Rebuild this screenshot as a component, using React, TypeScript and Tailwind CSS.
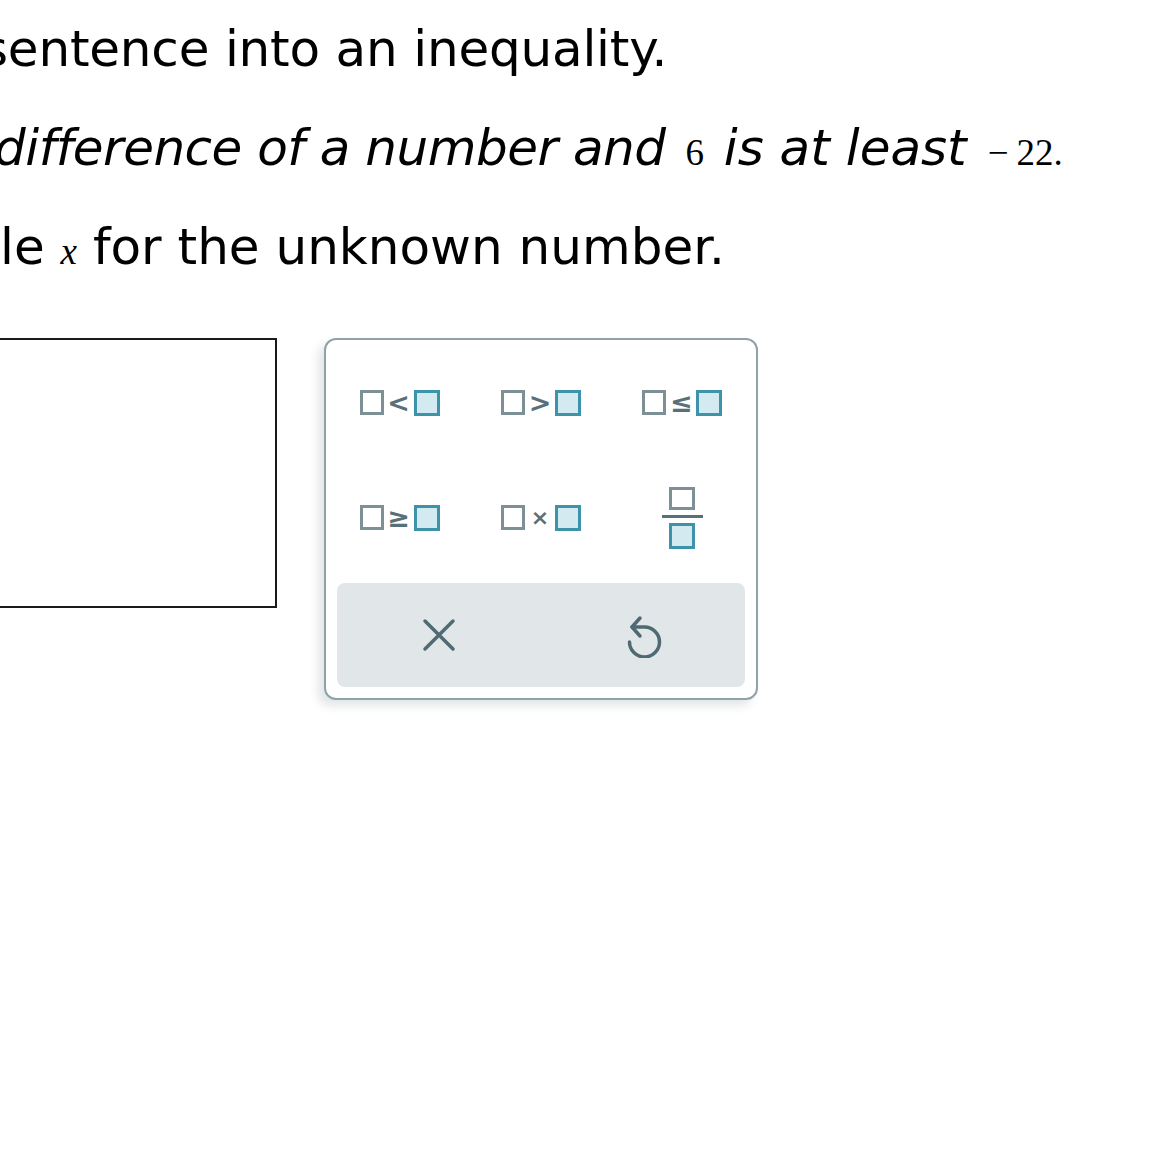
import React from "react";

const GRAY_BOX = "box-border inline-block w-[24px] h-[25px] border-[3px] border-[#7d9096] bg-white";
const BLUE_BOX = "box-border inline-block w-[26px] h-[26px] border-[3px] border-[#3d93aa] bg-[#d3eaf1]";

function Template({ op, small }: { op: string; small?: boolean }) {
  return (
    <span className="inline-flex items-center">
      <span className={GRAY_BOX} />
      <span
        className={`inline-block w-[30px] text-center leading-none text-[#587179] font-['DejaVu_Sans',sans-serif] ${
          small ? "text-[22px] font-bold" : "text-[27px] font-bold"
        }`}
      >
        {op}
      </span>
      <span className={BLUE_BOX} />
    </span>
  );
}

function Fraction() {
  return (
    <span className="inline-flex flex-col items-center">
      <span className="box-border inline-block w-[26px] h-[23px] border-[3px] border-[#7d9096] bg-white" />
      <span className="my-[5px] block h-[3px] w-[41px] bg-[#587179]" />
      <span className="box-border inline-block w-[26px] h-[26px] border-[3px] border-[#3d93aa] bg-[#d3eaf1]" />
    </span>
  );
}

function CloseIcon() {
  return (
    <svg width="34" height="34" viewBox="0 0 34 34" fill="none">
      <path d="M3 3L31 31M31 3L3 31" stroke="#4f6a73" strokeWidth="3.5" strokeLinecap="round" />
    </svg>
  );
}

function UndoIcon() {
  return (
    <svg width="40" height="46" viewBox="0 0 40 46" fill="none">
      <path
        d="M8 15H20.5A15 15 0 1 1 5.5 30"
        stroke="#4f6a73"
        strokeWidth="3.5"
        strokeLinecap="round"
      />
      <path
        d="M16 6L8 15L16 24"
        stroke="#4f6a73"
        strokeWidth="3.5"
        strokeLinecap="round"
        strokeLinejoin="round"
      />
    </svg>
  );
}

const KEYS = [
  <Template key="lt" op="<" />,
  <Template key="gt" op=">" />,
  <Template key="le" op="≤" />,
  <Template key="ge" op="≥" />,
  <Template key="times" op="×" small />,
  <Fraction key="frac" />,
];

const MATH = "not-italic font-['Liberation_Serif',serif] text-[37px] leading-none";

export default function App() {
  return (
    <div className="min-h-[1168px] overflow-hidden bg-white text-black">
      <div className="font-['DejaVu_Sans',Verdana,sans-serif] text-[50px] leading-[99px] whitespace-nowrap">
        <p className="ml-[-18px] tracking-[-0.2px]">sentence into an inequality.</p>
        <p className="ml-[-6px] italic">
          <span className="tracking-[-0.5px]">difference of a number and</span>{" "}
          <span className={`${MATH} mx-[4px]`}>6</span> is at least{" "}
          <span className={`${MATH} ml-[5px]`}>
            −<span className="ml-[8px]">22.</span>
          </span>
        </p>
        <p>
          le <span className={`${MATH} !italic`}>x</span> for the unknown number.
        </p>
      </div>

      <div className="mt-[41px] flex items-start gap-[47px]">
        <div className="ml-[-2px] h-[270px] w-[279px] border-2 border-[#1a1a1a]" />

        <div className="box-border w-[434px] rounded-[12px] border-2 border-[#8fa2a8] bg-white shadow-[-6px_6px_10px_rgba(40,60,70,0.13)]">
          <div className="grid grid-cols-3 px-[3px] pt-[5px]">
            {KEYS.map((k, i) => (
              <button key={i} className="flex h-[115px] items-center justify-center">
                {k}
              </button>
            ))}
          </div>
          <div className="mx-[11px] mt-[8px] mb-[11px] grid h-[104px] grid-cols-2 rounded-[8px] bg-[#e1e6e9]">
            <button className="flex items-center justify-center">
              <CloseIcon />
            </button>
            <button className="flex items-center justify-center pl-[2px]">
              <UndoIcon />
            </button>
          </div>
        </div>
      </div>
    </div>
  );
}
